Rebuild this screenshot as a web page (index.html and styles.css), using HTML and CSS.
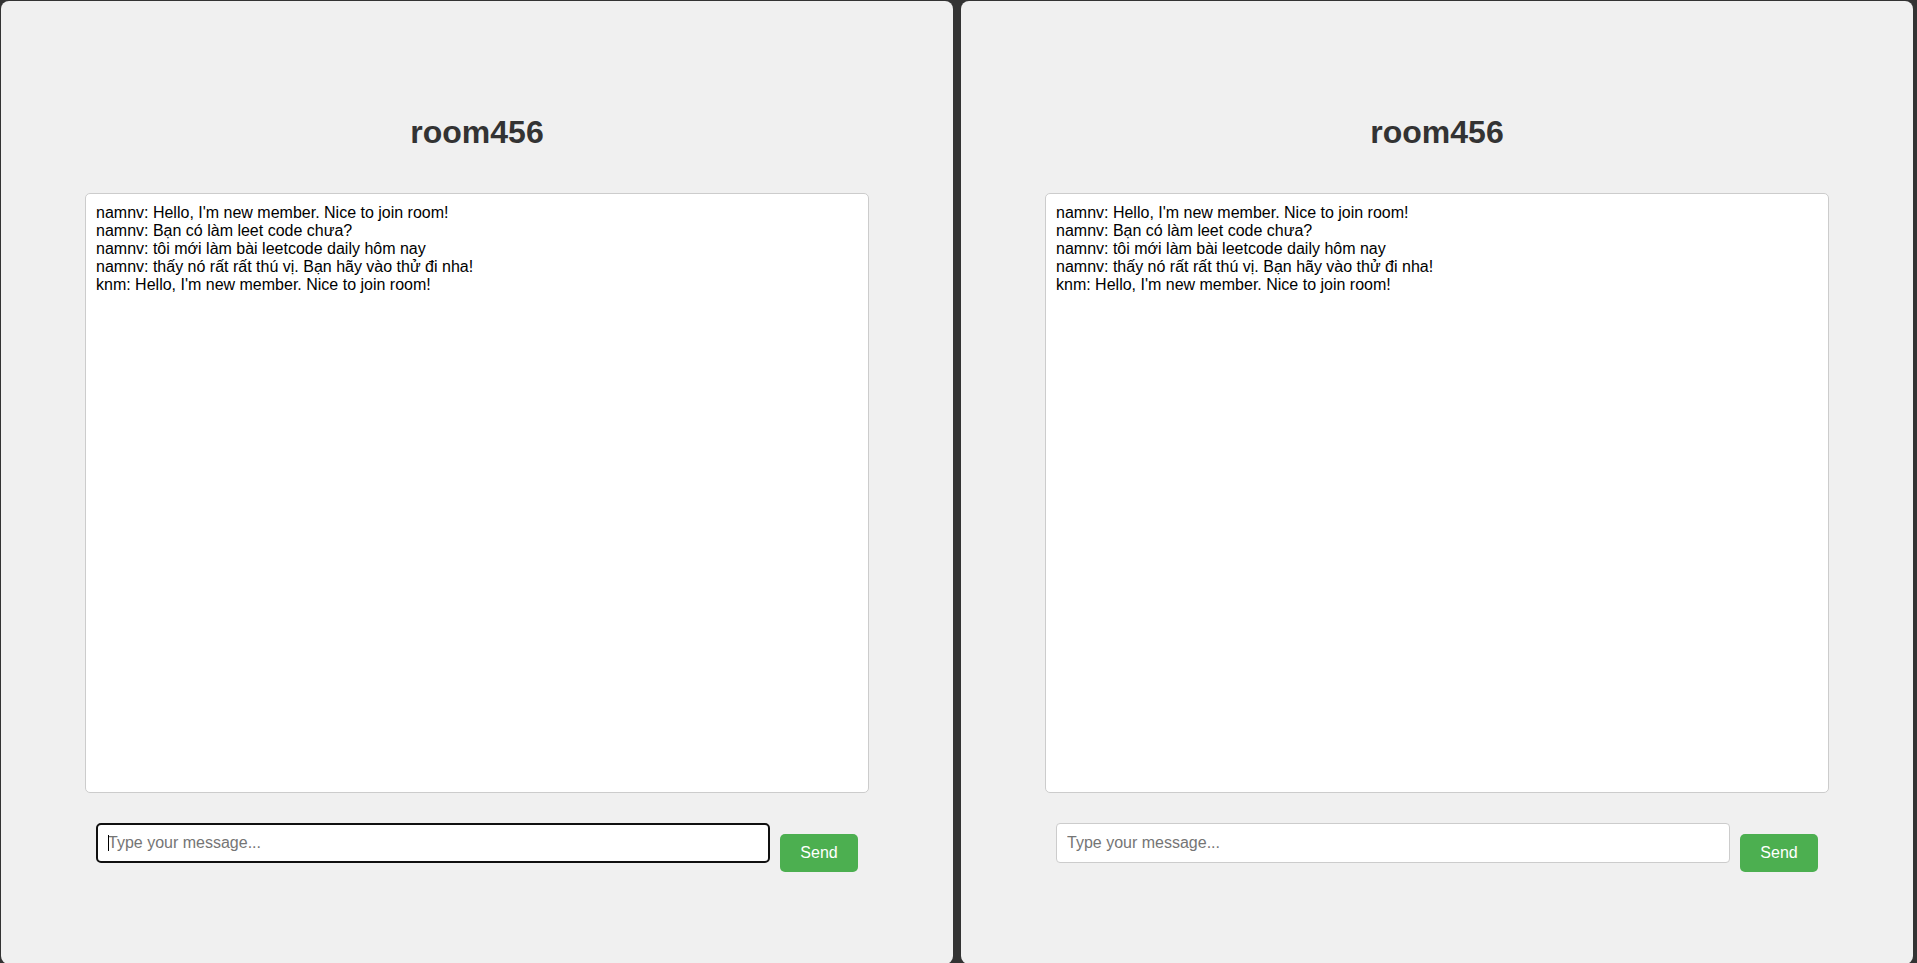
FILE: index.html
```html
<!DOCTYPE html>
<html lang="vi">
<head>
<meta charset="utf-8">
<title>room456</title>
<link rel="stylesheet" href="styles.css">
</head>
<body>
<div class="split">
  <section class="panel">
    <h1 class="room-title">room456</h1>
    <div class="chat-box">
      <div class="msg">namnv: Hello, I'm new member. Nice to join room!</div>
      <div class="msg">namnv: Bạn có làm leet code chưa?</div>
      <div class="msg">namnv: tôi mới làm bài leetcode daily hôm nay</div>
      <div class="msg">namnv: thấy nó rất rất thú vị. Bạn hãy vào thử đi nha!</div>
      <div class="msg">knm: Hello, I'm new member. Nice to join room!</div>
    </div>
    <div class="input-row">
      <div class="input-wrap">
        <input class="msg-input focused" type="text" placeholder="Type your message...">
        <span class="caret"></span>
      </div>
      <button class="send-btn">Send</button>
    </div>
  </section>
  <section class="panel">
    <h1 class="room-title">room456</h1>
    <div class="chat-box">
      <div class="msg">namnv: Hello, I'm new member. Nice to join room!</div>
      <div class="msg">namnv: Bạn có làm leet code chưa?</div>
      <div class="msg">namnv: tôi mới làm bài leetcode daily hôm nay</div>
      <div class="msg">namnv: thấy nó rất rất thú vị. Bạn hãy vào thử đi nha!</div>
      <div class="msg">knm: Hello, I'm new member. Nice to join room!</div>
    </div>
    <div class="input-row">
      <div class="input-wrap">
        <input class="msg-input" type="text" placeholder="Type your message...">
      </div>
      <button class="send-btn">Send</button>
    </div>
  </section>
</div>
</body>
</html>
```
FILE: styles.css
```css
* { box-sizing: border-box; }

html, body {
  margin: 0;
  height: 100%;
  background: #333333;
  overflow: hidden;
}

body {
  font-family: "Liberation Sans", Arial, sans-serif;
}

.split {
  display: flex;
  gap: 8px;
  padding: 1px 4px 0 1px;
  height: 100%;
}

.panel {
  width: 952px;
  height: 963px;
  background: #f0f0f0;
  border-radius: 8px;
  display: flex;
  flex-direction: column;
  align-items: center;
}

.room-title {
  margin: 113px 0 42px;
  font-size: 32px;
  line-height: 37px;
  font-weight: bold;
  color: #333333;
}

.chat-box {
  width: 784px;
  height: 600px;
  background: #ffffff;
  border: 1px solid #cccccc;
  border-radius: 5px;
  padding: 10px;
  font-size: 16px;
  line-height: 18px;
  color: #000000;
  overflow-y: auto;
}

.input-row {
  width: 784px;
  margin-top: 30px;
  padding: 0 11px;
  display: flex;
  align-items: flex-start;
  gap: 10px;
}

.input-wrap {
  position: relative;
  flex: 1;
  display: flex;
}

.msg-input {
  width: 100%;
  height: 40px;
  padding: 10px;
  font-family: "Liberation Sans", Arial, sans-serif;
  font-size: 16px;
  background: #ffffff;
  border: 1px solid #cccccc;
  border-radius: 4px;
  outline: none;
  color: #000;
}

.msg-input::placeholder {
  color: #757575;
}

.msg-input.focused {
  border: 2px solid #101010;
  border-radius: 5px;
  padding: 10px 10px;
}

.caret {
  position: absolute;
  left: 12px;
  top: 12px;
  width: 1px;
  height: 16px;
  background: #000;
}

.send-btn {
  margin-top: 11px;
  width: 78px;
  height: 38px;
  padding: 0;
  background: #4caf50;
  color: #ffffff;
  border: none;
  border-radius: 5px;
  font-family: "Liberation Sans", Arial, sans-serif;
  font-size: 16px;
  cursor: pointer;
}
```
